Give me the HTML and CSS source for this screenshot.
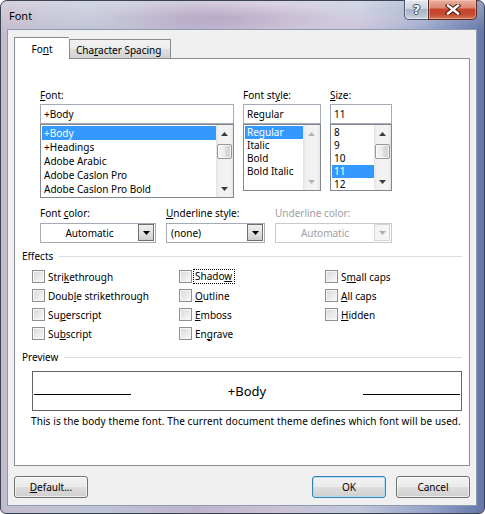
FILE: index.html
```html
<!DOCTYPE html>
<html>
<head>
<meta charset="utf-8">
<title>Font</title>
<link rel="stylesheet" href="styles.css">
</head>
<body>
<div class="window">
  <div class="titlebar">
    <div class="title">Font</div>
    <div class="caption">
      <div class="cap help"><span class="q">?</span></div>
      <div class="cap close">
        <svg width="16" height="11" viewBox="0 0 16 11"><path d="M3 1.5L13 9.5M13 1.5L3 9.5" stroke="#4a1b12" stroke-width="4.4" stroke-linecap="square"/><path d="M3 1.5L13 9.5M13 1.5L3 9.5" stroke="#fff" stroke-width="2.4" stroke-linecap="square"/></svg>
      </div>
    </div>
  </div>
  <div class="client">
    <div class="tabs">
      <div class="tab active">Fo<u>n</u>t</div>
      <div class="tab">Cha<u>r</u>acter Spacing</div>
    </div>
    <div class="panel">
      <div class="pickers">
        <div class="col c-font">
          <div class="lbl"><u>F</u>ont:</div>
          <div class="field">+Body</div>
          <div class="list l-font">
            <div class="items">
              <div class="item sel">+Body</div>
              <div class="item">+Headings</div>
              <div class="item">Adobe Arabic</div>
              <div class="item">Adobe Caslon Pro</div>
              <div class="item">Adobe Caslon Pro Bold</div>
            </div>
            <div class="sb">
              <div class="sb-btn"><svg width="7" height="4" viewBox="0 0 7 4"><path d="M3.5 0L7 4H0z" fill="#3c3c3c"/></svg></div>
              <div class="sb-track"><div class="thumb"></div></div>
              <div class="sb-btn"><svg width="7" height="4" viewBox="0 0 7 4"><path d="M0 0H7L3.5 4z" fill="#3c3c3c"/></svg></div>
            </div>
          </div>
        </div>
        <div class="col c-style">
          <div class="lbl">Font st<u>y</u>le:</div>
          <div class="field">Regular</div>
          <div class="list l-small">
            <div class="items">
              <div class="item sel">Regular</div>
              <div class="item">Italic</div>
              <div class="item">Bold</div>
              <div class="item">Bold Italic</div>
            </div>
            <div class="sb">
              <div class="sb-btn"><svg width="7" height="4" viewBox="0 0 7 4"><path d="M3.5 0L7 4H0z" fill="#b4b4b4"/></svg></div>
              <div class="sb-track"></div>
              <div class="sb-btn"><svg width="7" height="4" viewBox="0 0 7 4"><path d="M0 0H7L3.5 4z" fill="#b4b4b4"/></svg></div>
            </div>
          </div>
        </div>
        <div class="col c-size">
          <div class="lbl"><u>S</u>ize:</div>
          <div class="field">11</div>
          <div class="list l-small">
            <div class="items">
              <div class="item">8</div>
              <div class="item">9</div>
              <div class="item">10</div>
              <div class="item sel">11</div>
              <div class="item">12</div>
            </div>
            <div class="sb">
              <div class="sb-btn"><svg width="7" height="4" viewBox="0 0 7 4"><path d="M3.5 0L7 4H0z" fill="#3c3c3c"/></svg></div>
              <div class="sb-track"><div class="thumb"></div></div>
              <div class="sb-btn"><svg width="7" height="4" viewBox="0 0 7 4"><path d="M0 0H7L3.5 4z" fill="#3c3c3c"/></svg></div>
            </div>
          </div>
        </div>
      </div>

      <div class="combos">
        <div class="ccol w-color">
          <div class="lbl2">Font <u>c</u>olor:</div>
          <div class="combo">
            <div class="ctext center">Automatic</div>
            <div class="dd"><svg width="7" height="4" viewBox="0 0 7 4"><path d="M0 0H7L3.5 4z" fill="#000"/></svg></div>
          </div>
        </div>
        <div class="ccol w-ustyle">
          <div class="lbl2"><u>U</u>nderline style:</div>
          <div class="combo">
            <div class="ctext left">(none)</div>
            <div class="dd"><svg width="7" height="4" viewBox="0 0 7 4"><path d="M0 0H7L3.5 4z" fill="#000"/></svg></div>
          </div>
        </div>
        <div class="ccol w-ucolor disabled">
          <div class="lbl2">Underline color:</div>
          <div class="combo">
            <div class="ctext center">Automatic</div>
            <div class="dd"><svg width="7" height="4" viewBox="0 0 7 4"><path d="M0 0H7L3.5 4z" fill="#b0b0b0"/></svg></div>
          </div>
        </div>
      </div>

      <div class="group"><span class="gname">Effects</span><span class="rule"></span></div>
      <div class="effects">
        <div class="chk"><span class="box"></span><span class="ctl">Stri<u>k</u>ethrough</span></div>
        <div class="chk"><span class="box"></span><span class="ctl">Doub<u>l</u>e strikethrough</span></div>
        <div class="chk"><span class="box"></span><span class="ctl">Su<u>p</u>erscript</span></div>
        <div class="chk"><span class="box"></span><span class="ctl">Su<u>b</u>script</span></div>
        <div class="chk"><span class="box"></span><span class="ctl focus">Shado<u>w</u></span></div>
        <div class="chk"><span class="box"></span><span class="ctl"><u>O</u>utline</span></div>
        <div class="chk"><span class="box"></span><span class="ctl"><u>E</u>mboss</span></div>
        <div class="chk"><span class="box"></span><span class="ctl">En<u>g</u>rave</span></div>
        <div class="chk"><span class="box"></span><span class="ctl">S<u>m</u>all caps</span></div>
        <div class="chk"><span class="box"></span><span class="ctl"><u>A</u>ll caps</span></div>
        <div class="chk"><span class="box"></span><span class="ctl"><u>H</u>idden</span></div>
      </div>

      <div class="group g-preview"><span class="gname">Preview</span><span class="rule"></span></div>
      <div class="preview">
        <div class="pline"></div>
        <div class="ptext">+Body</div>
        <div class="pline"></div>
      </div>
      <div class="desc">This is the body theme font. The current document theme defines which font will be used.</div>
    </div>
    <div class="buttons">
      <div class="btn"><u>D</u>efault...</div>
      <div class="btn ok">OK</div>
      <div class="btn cancel">Cancel</div>
    </div>
  </div>
</div>
</body>
</html>
```

FILE: styles.css
```css
* { box-sizing: border-box; }
html, body { margin: 0; padding: 0; }
body {
  width: 485px;
  height: 514px;
  overflow: hidden;
  background: #ffffff;
  font-family: "Noto Sans", "Open Sans", sans-serif;
  font-size: 10px;
  color: #000;
}
u { text-decoration: underline; text-underline-offset: 1px; }

.window {
  width: 485px;
  height: 514px;
  border: 1px solid #3b4454;
  border-radius: 7px 7px 6px 6px;
  padding: 0 7px 7px 6px;
  display: flex;
  flex-direction: column;
  background:
    linear-gradient(180deg, rgba(255,255,255,0.3) 0, rgba(255,255,255,0) 30px),
    radial-gradient(ellipse 120px 14px at 220px 16px, rgba(150,125,175,0.45), rgba(150,125,175,0)),
    radial-gradient(ellipse 90px 14px at 350px 22px, rgba(215,195,220,0.55), rgba(215,195,220,0)),
    linear-gradient(90deg, #c4bccd 0%, #c0c4d6 18%, #bdb4cc 40%, #cbc2d6 58%, #c1c6da 74%, #98a6c9 88%, #6576a8 100%);
}

.titlebar {
  height: 28px;
  display: flex;
  align-items: flex-start;
  flex: none;
}
.title {
  margin: 7px 0 0 2px;
  line-height: 16px;
  font-size: 11px;
  color: #000;
}
.caption {
  margin-left: auto;
  margin-top: -1px;
  display: flex;
}
.cap {
  height: 20px;
  border: 1px solid #4c5568;
  border-top: 0;
  display: flex;
  align-items: center;
  justify-content: center;
}
.cap.help {
  width: 24px;
  border-right: 0;
  border-radius: 0 0 0 5px;
  background: linear-gradient(180deg, #e4e8ef 0%, #cdd3de 45%, #aab3c4 50%, #b9c2d2 80%, #cfd6e2 100%);
  box-shadow: inset 0 0 0 1px rgba(255,255,255,0.45);
}
.cap.close {
  width: 49px;
  border-radius: 0 0 5px 0;
  border-color: #5a2a22;
  background: linear-gradient(180deg, #eab0a2 0%, #dc8a76 40%, #c7432b 50%, #c24a30 75%, #d67858 100%);
  box-shadow: inset 0 0 0 1px rgba(255,210,200,0.45);
}
.q {
  font-family: "DejaVu Sans", sans-serif;
  font-weight: bold;
  font-size: 13px;
  line-height: 14px;
  color: #fff;
  text-shadow: 0 0 1px #2c3444, 1px 0 0 #4a5366, -1px 0 0 #4a5366, 0 1px 0 #4a5366, 0 -1px 0 #4a5366;
}

.client {
  flex: none;
  width: 470px;
  height: 477px;
  border: 1px solid #8e9bb0;
  background: #f0f0f0;
  padding: 7px 6px 0 6px;
  display: flex;
  flex-direction: column;
}

.tabs {
  display: flex;
  align-items: flex-end;
  height: 21px;
  position: relative;
  z-index: 1;
}
.tab {
  width: 102px;
  height: 19px;
  border: 1px solid #898c95;
  border-bottom: 0;
  padding: 2px 0 0 6px;
  line-height: 16px;
  background: linear-gradient(180deg, #f3f3f3 0%, #ebebeb 50%, #dedede 51%, #d2d2d2 100%);
  white-space: nowrap;
}
.tab.active {
  width: 55px;
  height: 22px;
  margin-bottom: -1px;
  background: #fff;
  padding: 3px 0 0 0;
  text-align: center;
  border-right: 0;
}

.panel {
  width: 456px;
  height: 408px;
  border: 1px solid #898c95;
  background: #fff;
  padding-top: 28px;
}

.pickers {
  display: flex;
  gap: 9px;
  margin-left: 25px;
}
.c-font { width: 194px; }
.c-style { width: 78px; }
.c-size { width: 62px; }
.lbl {
  height: 17px;
  line-height: 16px;
  white-space: nowrap;
}
.field {
  height: 20px;
  border: 1px solid #a4abb6;
  padding-left: 3px;
  line-height: 18px;
  background: #fff;
}
.list {
  display: flex;
  border: 1px solid #828790;
  background: #fff;
  overflow: hidden;
}
.l-font { height: 74px; }
.l-small { height: 67px; }
.items {
  flex: 1;
  padding: 1px 0 0 1px;
  overflow: hidden;
  min-width: 0;
}
.l-font .item { height: 14px; line-height: 14px; }
.l-small .item { height: 13px; line-height: 13px; }
.item {
  padding-left: 2px;
  white-space: nowrap;
}
.item.sel {
  background: #3399ff;
  color: #fff;
}
.sb {
  width: 17px;
  flex: none;
  display: flex;
  flex-direction: column;
  background: linear-gradient(90deg, #e3e3e3 0%, #f1f1f1 18%, #f3f3f3 80%, #e6e6e6 100%);
}
.sb-btn {
  height: 17px;
  flex: none;
  display: flex;
  align-items: center;
  justify-content: center;
}
.sb-track {
  flex: 1;
}
.thumb {
  height: 15px;
  margin: 2px 1px 0 1px;
  border: 1px solid #979797;
  border-radius: 2px;
  background: linear-gradient(90deg, #f4f4f4 0%, #ebebeb 50%, #dcdcdc 51%, #d3d3d3 100%);
  box-shadow: inset 0 0 0 1px rgba(255,255,255,0.7);
}

.combos {
  display: flex;
  gap: 10px;
  margin: 7px 0 0 25px;
}
.w-color { width: 116px; }
.w-ustyle { width: 99px; }
.w-ucolor { width: 117px; }
.lbl2 {
  height: 18px;
  line-height: 16px;
  white-space: nowrap;
}
.combo {
  height: 20px;
  border: 1px solid #a4abb6;
  background: #fff;
  display: flex;
}
.ctext {
  flex: 1;
  line-height: 18px;
  white-space: nowrap;
}
.ctext.center { text-align: center; }
.ctext.left { padding-left: 4px; }
.dd {
  width: 16px;
  height: 17px;
  margin-right: 1px;
  border: 1px solid #6f6f6f;
  background: linear-gradient(180deg, #f0f0f0 0%, #e2e2e2 50%, #cfcfcf 100%);
  display: flex;
  align-items: center;
  justify-content: center;
}
.disabled .lbl2, .disabled .ctext { color: #a0a0a0; }
.disabled .combo { border-color: #c9c9c9; }
.disabled .dd {
  border-color: #d6d6d6;
  background: #f4f4f4;
}

.group {
  display: flex;
  align-items: center;
  height: 16px;
  margin: 5px 7px 0 7px;
}
.gname { line-height: 16px; }
.rule {
  flex: 1;
  height: 1px;
  margin-left: 6px;
  background: #d5dfe5;
}
.g-preview { margin-top: 6px; }

.effects {
  display: grid;
  grid-template-columns: 147px 146px 1fr;
  grid-template-rows: repeat(4, 19px);
  grid-auto-flow: column;
  margin: 3px 0 0 17px;
}
.chk {
  display: flex;
  align-items: center;
  white-space: nowrap;
}
.box {
  width: 13px;
  height: 13px;
  flex: none;
  border: 1px solid #8f8f8f;
  background: linear-gradient(135deg, #d9d9d9 0%, #eaeaea 55%, #fbfbfb 100%);
  box-shadow: inset 0 0 0 1px #f6f6f6;
}
.ctl { margin-left: 3px; line-height: 16px; }
.ctl.focus {
  margin-left: 2px;
  padding: 0 2px 0 1px;
  line-height: 13px;
  outline: 1px dotted #000;
}

.preview {
  display: grid;
  grid-template-columns: 97px 1fr 97px;
  align-items: start;
  width: 430px;
  height: 40px;
  margin: 6px 0 0 17px;
  border: 1px solid #646464;
  padding: 0 1px;
}
.pline {
  height: 23px;
  border-bottom: 1px solid #000;
}
.ptext {
  margin-top: 10px;
  line-height: 18px;
  font-size: 13px;
  text-align: center;
}
.desc {
  margin: 2px 0 0 16px;
  line-height: 16px;
  letter-spacing: 0.1px;
  white-space: nowrap;
}

.buttons {
  display: flex;
  margin-top: 10px;
  height: 22px;
}
.btn {
  width: 74px;
  height: 22px;
  border: 1px solid #707070;
  border-radius: 3px;
  background: linear-gradient(180deg, #f2f2f2 0%, #ebebeb 50%, #dddddd 51%, #cfcfcf 100%);
  box-shadow: inset 0 0 0 1px rgba(255,255,255,0.6);
  text-align: center;
  line-height: 20px;
}
.btn.ok {
  margin-left: auto;
  border-color: #3c7fb1;
  box-shadow: inset 0 0 0 1px #aedcf5;
}
.btn.cancel { margin-left: 10px; }
```
